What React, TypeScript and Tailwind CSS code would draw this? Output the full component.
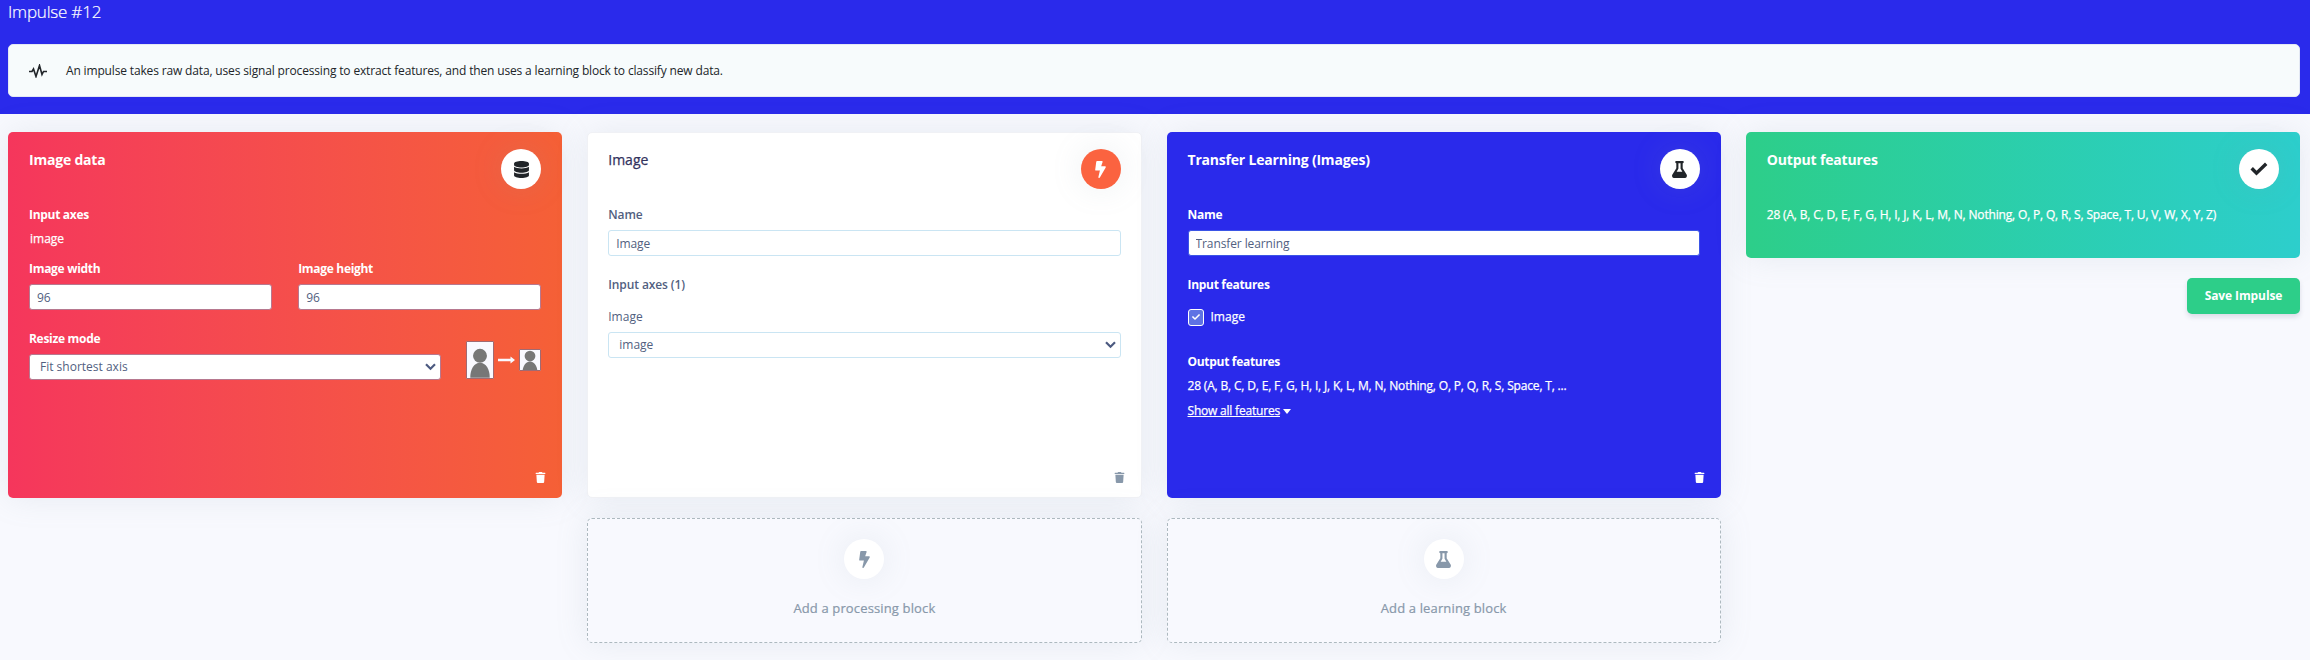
import type { ReactNode } from "react";
import { FaDatabase, FaBolt, FaFlask, FaCheck, FaTrash } from "react-icons/fa";

const shadow = "shadow-[0_0_32px_0_rgba(136,152,170,0.15)]";

function Badge({ className, children }: { className: string; children: ReactNode }) {
  return (
    <div className={`flex size-10 shrink-0 items-center justify-center rounded-full text-[17px] ${shadow} ${className}`}>
      {children}
    </div>
  );
}

function CheckMark() {
  return (
    <svg width="18" height="14" viewBox="0 0 18 14" fill="none" stroke="currentColor" strokeWidth="3.400">
      <path d="M1.700 6.200l4.800 5L16.200 1.700" />
    </svg>
  );
}

function Label({ children, className = "" }: { children: ReactNode; className?: string }) {
  return <div className={`h-5 whitespace-nowrap leading-5 ${className}`}>{children}</div>;
}

function TextField({ value, className = "" }: { value: string; className?: string }) {
  return (
    <input
      readOnly
      value={value}
      className={`block h-[26px] w-full rounded-[3px] border bg-white px-[7px] text-[12px] tracking-[-0.1px] text-[#525f7f] outline-none ${className}`}
    />
  );
}

function SelectField({ value, className = "" }: { value: string; className?: string }) {
  return (
    <div
      className={`flex h-[26px] items-center justify-between rounded-[3px] border bg-white pr-[4px] pl-[10px] text-[12px] text-[#525f7f] ${className}`}
    >
      <span>{value}</span>
      <svg width="11" height="8" viewBox="0 0 11 8" fill="none" stroke="#4c5a80" strokeWidth="2.200">
        <path d="M1 1.300l4.500 4.500L10 1.300" />
      </svg>
    </div>
  );
}

function CardHeader({ title, badge, className = "" }: { title: string; badge: ReactNode; className?: string }) {
  return (
    <div className={`flex h-[73px] items-start justify-between pt-[17px] text-[14px] ${className}`}>
      <h2 className="whitespace-nowrap leading-[22px]">{title}</h2>
      {badge}
    </div>
  );
}

function Person({ width, height, cut }: { width: number; height: number; cut: number }) {
  return (
    <svg
      width={width}
      height={height}
      viewBox={`0 ${cut} 28 ${(28 * height) / width}`}
      className="rounded-[1px] border border-[#a06a72] bg-[#f9f9ff]"
    >
      <circle cx="14" cy="14.5" r="7.5" fill="#777" />
      <path d="M3.500 38c0-9 4-16 10.500-16S24.500 29 24.500 38z" fill="#777" />
    </svg>
  );
}

function AddBlock({ icon, label }: { icon: ReactNode; label: string }) {
  return (
    <div
      className={`flex h-[125px] flex-col items-center rounded-[5px] border border-dashed border-[#adb9bf] bg-[#f8f9fe] pt-5 text-[#8898aa] ${shadow}`}
    >
      <Badge className="bg-white">{icon}</Badge>
      <div className="mt-[19px] text-[13px] leading-5 tracking-[0.14px] [-webkit-text-stroke:0.2px]">{label}</div>
    </div>
  );
}

export default function App() {
  return (
    <div className="h-[660px] w-[2310px] overflow-hidden bg-[#f8f9fe] font-['Open_Sans',sans-serif] text-[12px] leading-5">
      <header className="h-[114px] bg-[#2a2aeb] pr-[10px] pl-2">
        <h1 className="h-11 text-[17px] font-light leading-[24px] tracking-[-0.2px] text-white [-webkit-text-stroke:0.2px]">
          Impulse #12
        </h1>
        <div className="flex h-[53px] items-center rounded-[5px] border border-[#e3e8f4] bg-[#f7fbfc] pl-5 text-[#212529]">
          <svg width="18" height="14" viewBox="0 0 18 14" fill="none" stroke="#212529" strokeWidth="1.600">
            <path d="M0 7.500h3L4.500 5l2.500 7.500L10.500 1.500l2.500 9 1.500-3H18" />
          </svg>
          <p className="ml-[19px] tracking-[-0.155px]">
            An impulse takes raw data, uses signal processing to extract features, and then uses a learning block to
            classify new data.
          </p>
        </div>
      </header>

      <main className="grid grid-cols-4 gap-x-[25px] pt-[18px] pr-[10px] pl-2 text-white">
        <section
          className={`flex h-[366px] flex-col rounded-[5px] bg-linear-to-r from-[#f5365c] to-[#f56036] px-[21px] ${shadow}`}
        >
          <CardHeader
            title="Image data"
            className="font-bold tracking-[-0.2px]"
            badge={
              <Badge className="bg-white text-[#212529]">
                <FaDatabase />
              </Badge>
            }
          />
          <Label className="font-bold tracking-[-0.3px]">Input axes</Label>
          <Label className="mt-1 pl-px [-webkit-text-stroke:0.25px]">image</Label>
          <div className="mt-[10px] grid grid-cols-2 gap-x-[26px]">
            <div>
              <Label className="font-bold tracking-[-0.3px]">Image width</Label>
              <TextField value="96" className="mt-[5px] border-[#b7788f]" />
            </div>
            <div>
              <Label className="font-bold tracking-[-0.3px]">Image height</Label>
              <TextField value="96" className="mt-[5px] border-[#b7788f]" />
            </div>
          </div>
          <div className="mt-[19px] flex justify-between">
            <div className="w-[412px]">
              <Label className="font-bold tracking-[-0.3px]">Resize mode</Label>
              <SelectField value="Fit shortest axis" className="mt-[5px] border-[#b7788f]" />
            </div>
            <div className="mb-px flex h-[38px] items-center self-end">
              <Person width={28} height={38} cut={0} />
              <svg width="17" height="8" viewBox="0 0 17 8" fill="#f9f9ff" className="mx-1">
                <path d="M0 2.700h12.500V.5L17 4l-4.500 3.500V5.300H0z" />
              </svg>
              <Person width={22} height={22} cut={6} />
            </div>
          </div>
          <FaTrash className="mt-auto -mr-[5px] mb-[15px] self-end text-[11px]" />
        </section>

        <section
          className={`flex h-[366px] flex-col rounded-[5px] border border-[#f0f1f5] bg-white px-5 text-[#525f7f] ${shadow}`}
        >
          <CardHeader
            title="Image"
            className="-mt-px text-[#32325d] [-webkit-text-stroke:0.25px]"
            badge={
              <Badge className="bg-[#fb6340] text-white">
                <FaBolt />
              </Badge>
            }
          />
          <Label className="font-semibold tracking-[-0.1px]">Name</Label>
          <TextField value="Image" className="mt-[5px] border-[#cae5f3]" />
          <Label className="mt-[19px] font-semibold tracking-[-0.1px]">Input axes (1)</Label>
          <Label className="mt-3">Image</Label>
          <SelectField value="image" className="mt-[5px] border-[#cae5f3]" />
          <FaTrash className="mt-auto -mr-1 mb-[14px] self-end text-[11px] text-[#8898aa]" />
        </section>

        <section className={`flex h-[366px] flex-col rounded-[5px] bg-[#2a2aeb] px-[21px] ${shadow}`}>
          <CardHeader
            title="Transfer Learning (Images)"
            className="font-bold tracking-[-0.2px]"
            badge={
              <Badge className="bg-white text-[#212529]">
                <FaFlask />
              </Badge>
            }
          />
          <Label className="font-bold tracking-[-0.3px]">Name</Label>
          <TextField value="Transfer learning" className="mt-[5px] border-[#3b55e6]" />
          <Label className="mt-[19px] font-bold tracking-[-0.3px]">Input features</Label>
          <div className="mt-3 flex h-5 items-center gap-[7px] [-webkit-text-stroke:0.25px]">
            <span className="flex h-[17px] w-4 items-center justify-center rounded-[3px] border border-white bg-[#5e72e4] text-[8px]">
              <FaCheck />
            </span>
            Image
          </div>
          <Label className="mt-[25px] font-bold tracking-[-0.3px]">Output features</Label>
          <Label className="mt-1 tracking-[-0.17px] [-webkit-text-stroke:0.25px]">
            28 (A, B, C, D, E, F, G, H, I, J, K, L, M, N, Nothing, O, P, Q, R, S, Space, T, ...
          </Label>
          <div className="mt-[5px] flex h-5 items-center gap-[3px] tracking-[-0.2px] [-webkit-text-stroke:0.25px]">
            <span className="underline">Show all features</span>
            <svg width="8" height="5" viewBox="0 0 8 5" fill="white">
              <path d="M0 0h8L4 5z" />
            </svg>
          </div>
          <FaTrash className="mt-auto -mr-[5px] mb-[15px] self-end text-[11px]" />
        </section>

        <div className="flex flex-col">
          <section
            className={`h-[126px] rounded-[5px] bg-linear-to-r from-[#2dce89] to-[#2dcecc] px-[21px] ${shadow}`}
          >
            <CardHeader
              title="Output features"
              className="font-bold tracking-[-0.15px]"
              badge={
                <Badge className="bg-white text-[#212529]">
                  <CheckMark />
                </Badge>
              }
            />
            <Label className="tracking-[-0.17px] [-webkit-text-stroke:0.25px]">
              28 (A, B, C, D, E, F, G, H, I, J, K, L, M, N, Nothing, O, P, Q, R, S, Space, T, U, V, W, X, Y, Z)
            </Label>
          </section>
          <button className="mt-5 h-9 w-[113px] self-end rounded-[5px] bg-[#2dce89] text-[12px] font-bold tracking-[-0.1px] shadow-[0_3px_5px_rgba(50,50,93,0.14)]">
            Save Impulse
          </button>
        </div>

        <div className="col-start-2 mt-5">
          <AddBlock icon={<FaBolt />} label="Add a processing block" />
        </div>
        <div className="col-start-3 mt-5">
          <AddBlock icon={<FaFlask />} label="Add a learning block" />
        </div>
      </main>
    </div>
  );
}
